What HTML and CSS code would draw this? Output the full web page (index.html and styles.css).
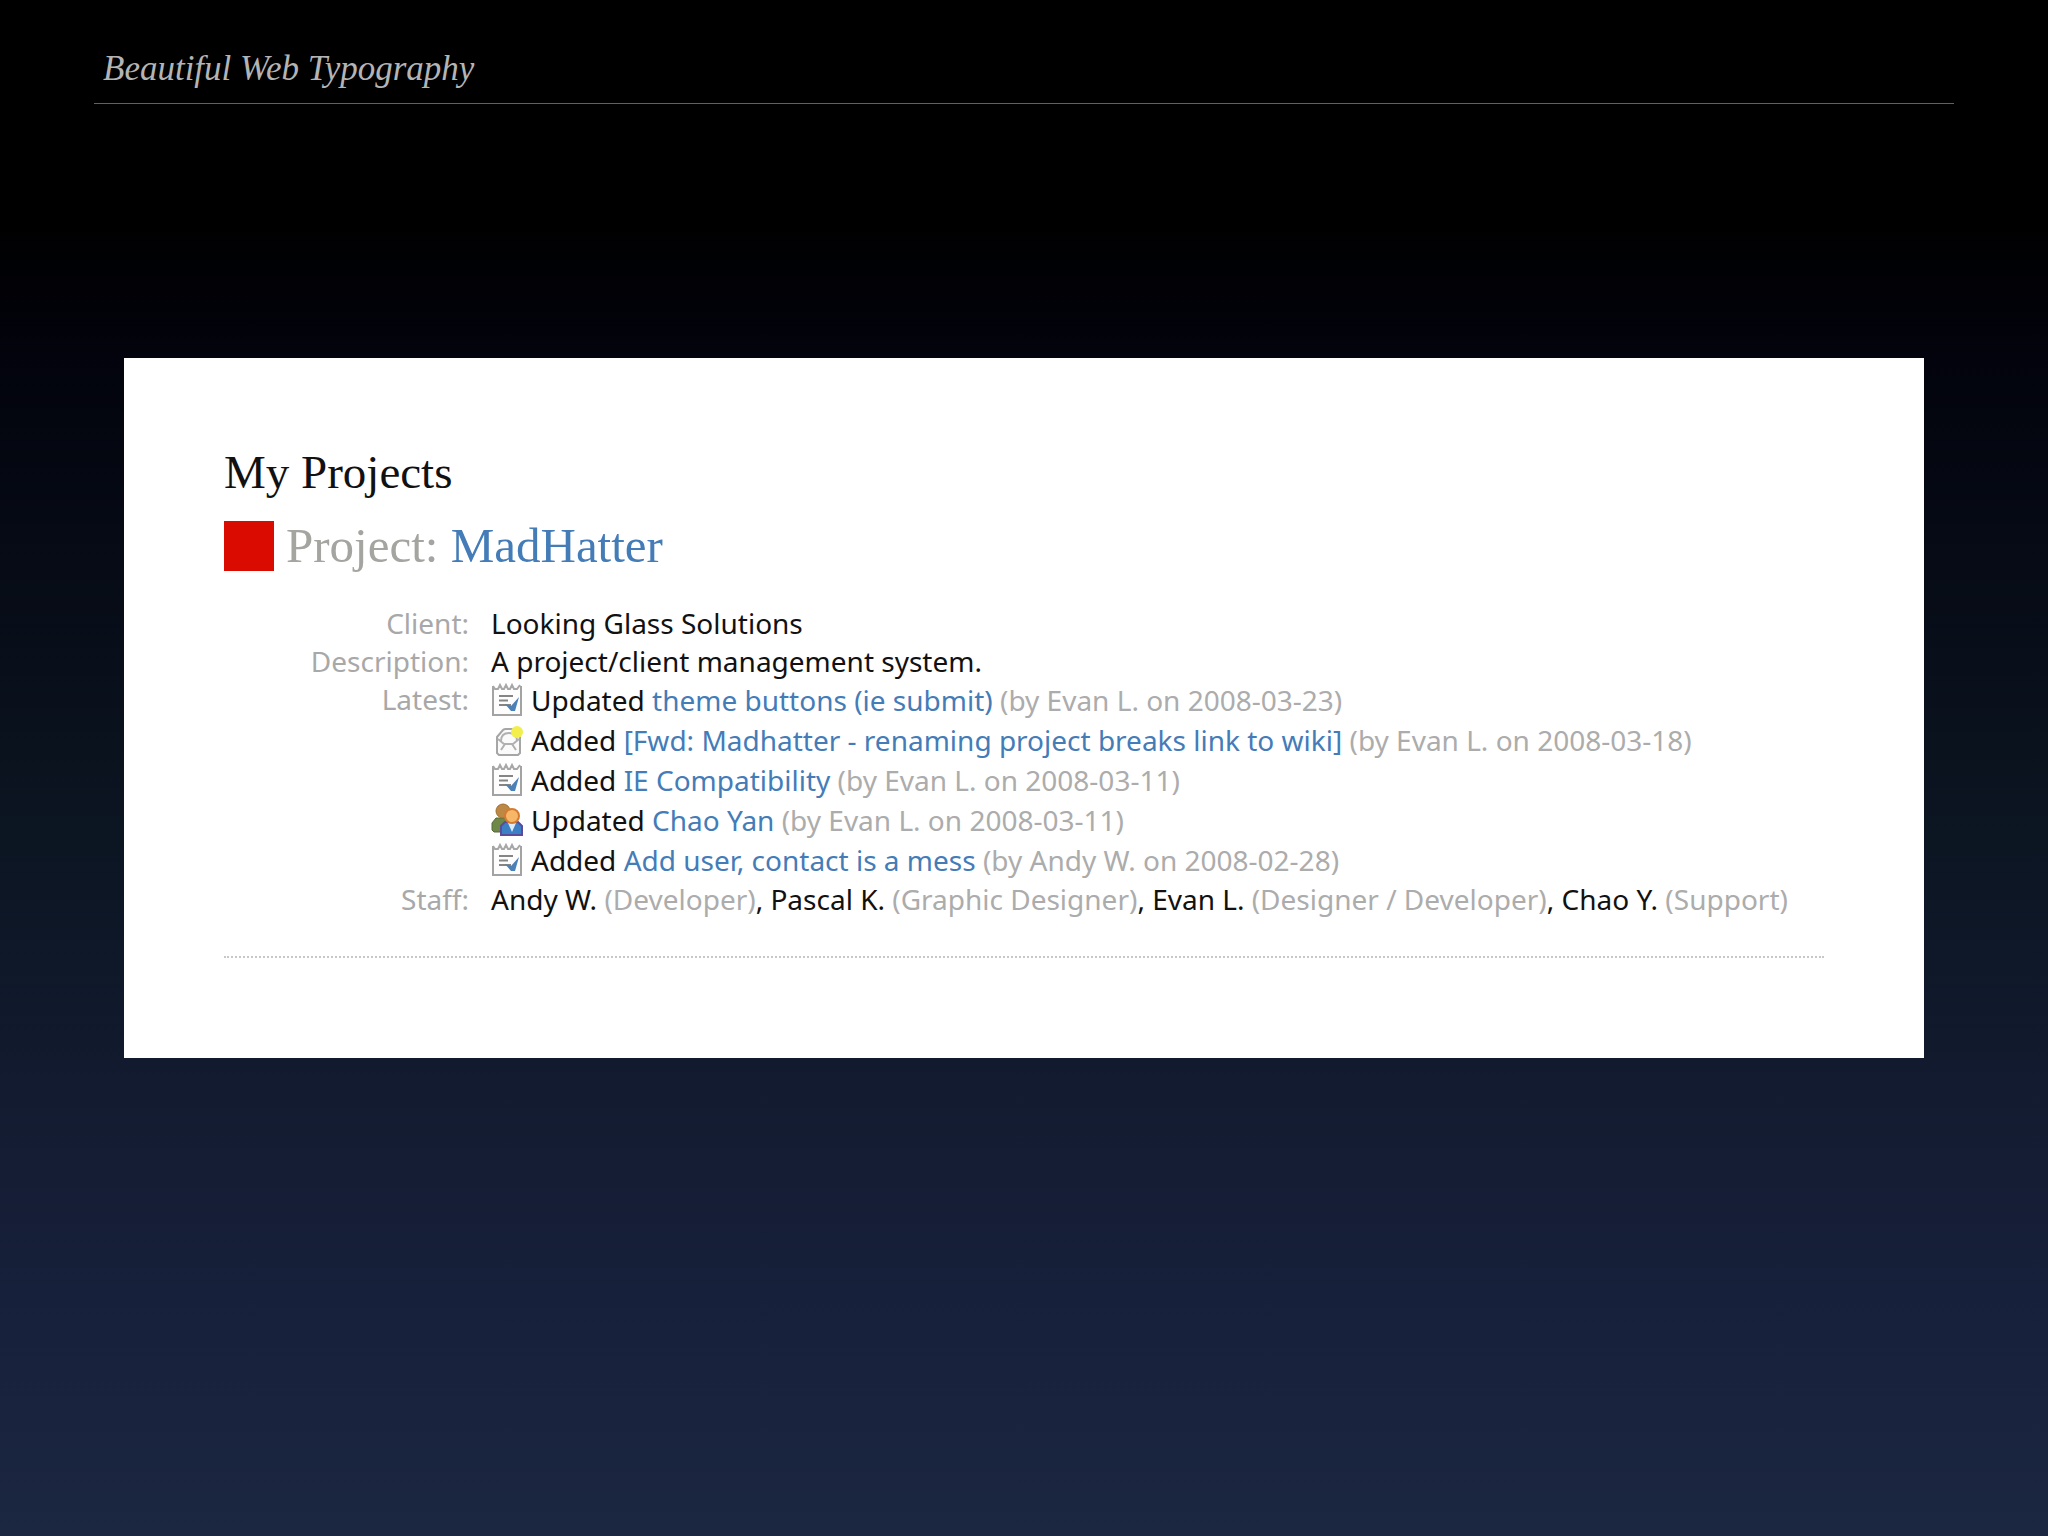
FILE: index.html
```html
<!DOCTYPE html>
<html lang="en">

<head>
    <meta charset="UTF-8">
    <meta name="viewport" content="width=device-width, initial-scale=1.0">
    <title>Beautiful Web Typography</title>
    <link rel="stylesheet" href="styles.css">
</head>

<body>
    <!-- Shared icons -->
    <svg class="sprite" aria-hidden="true">
        <symbol id="icon-task" viewBox="0 0 32 34">
            <path d="M2 3v29h28V3" fill="#fdfdfd" stroke="#a3a3a3" stroke-width="2" />
            <path d="M2 3l2 3h3l2-4 2 4h2l2-4 2 4h2l2-4 2 4h3l3-4" fill="none" stroke="#a8a8a8" stroke-width="2" />
            <path d="M8 13h14M8 17.500h9M8 22h12" stroke="#858585" stroke-width="2" />
            <path d="M14 21l6 2 8-9-4 14h-4z" fill="#4c80b8" />
        </symbol>
        <symbol id="icon-mail" viewBox="0 0 32 34">
            <path d="M6 14l6-7q1-1 3-1h8l6 6v18l-2 2H8l-2-2z" fill="#fafafa" stroke="#a6a6a6" stroke-width="2" />
            <path d="M10 18c0-6 3-8 8-8s8 2 8 8" fill="none" stroke="#b0b0b0" stroke-width="2" />
            <path d="M7 16l6 5h9l6-5M14 21l-4 6M21 21l4 6" fill="none" stroke="#b0b0b0" stroke-width="2" />
            <circle cx="26" cy="9" r="6" fill="#f2ee4c" />
        </symbol>
        <symbol id="icon-people" viewBox="0 0 32 34">
            <path d="M1 27v-7l4-5h10v14H3z" fill="#6d8848" stroke="#536b38" />
            <circle cx="12" cy="8" r="7" fill="#bd8845" stroke="#a3702f" />
            <path d="M10 32V23l4-4h13l4 4v9z" fill="#3d7fc4" stroke="#5b4c9b" stroke-width="2" />
            <path d="M17 20l4 9 4-9z" fill="#dcecf8" />
            <circle cx="21" cy="13" r="7" fill="#f7b768" stroke="#d57b30" stroke-width="2" />
        </symbol>
    </svg>

    <header class="page-header">
        <p class="page-title">Beautiful Web Typography</p>
    </header>

    <main class="panel">
        <h1 class="heading">My Projects</h1>
        <h2 class="heading project">
            <span class="swatch"></span>
            <span>Project: <a href="#">MadHatter</a></span>
        </h2>

        <dl class="details">
            <dt>Client:</dt>
            <dd>Looking Glass Solutions</dd>
            <dt>Description:</dt>
            <dd>A project/client management system.</dd>
            <dt>Latest:</dt>
            <dd>
                <ul class="latest">
                    <li><svg class="icon"><use href="#icon-task" /></svg><span>Updated <a href="#">theme buttons (ie submit)</a> <small>(by Evan L. on 2008-03-23)</small></span></li>
                    <li><svg class="icon"><use href="#icon-mail" /></svg><span>Added <a href="#">[Fwd: Madhatter - renaming project breaks link to wiki]</a> <small>(by Evan L. on 2008-03-18)</small></span></li>
                    <li><svg class="icon"><use href="#icon-task" /></svg><span>Added <a href="#">IE Compatibility</a> <small>(by Evan L. on 2008-03-11)</small></span></li>
                    <li><svg class="icon"><use href="#icon-people" /></svg><span>Updated <a href="#">Chao Yan</a> <small>(by Evan L. on 2008-03-11)</small></span></li>
                    <li><svg class="icon"><use href="#icon-task" /></svg><span>Added <a href="#">Add user, contact is a mess</a> <small>(by Andy W. on 2008-02-28)</small></span></li>
                </ul>
            </dd>
            <dt>Staff:</dt>
            <dd>Andy W. <small>(Developer)</small>, Pascal K. <small>(Graphic Designer)</small>, Evan L. <small>(Designer / Developer)</small>, Chao Y. <small>(Support)</small></dd>
        </dl>
    </main>
</body>

</html>
```
FILE: styles.css
```css
* {
    box-sizing: border-box;
    margin: 0;
    padding: 0;
}

body {
    min-height: 100vh;
    background: linear-gradient(#000000 14%, #02030c 23%, #0b1420 52%, #17203a 84%, #1b2641);
    font-family: "Noto Sans", "Open Sans", sans-serif;
    font-size: 28px;
    line-height: 38px;
    color: #111111;
}

a {
    color: #447cb8;
    text-decoration: none;
}

a:hover {
    text-decoration: underline;
}

small {
    font-size: inherit;
    color: #acacac;
}

.sprite {
    display: none;
}

/* Header */

.page-header {
    margin: 0 94px;
    padding: 46px 9px 12px;
    border-bottom: 1px solid #5f635e;
}

.page-title {
    font-family: "Liberation Serif", serif;
    font-size: 35px;
    font-style: italic;
    line-height: 45px;
    color: #b4b4b4;
}

/* Project panel */

.panel {
    margin: 254px 124px 0;
    padding: 84px 100px 100px;
    background-color: #ffffff;
}

.heading {
    font-family: "Liberation Serif", serif;
    font-size: 47px;
    font-weight: normal;
    line-height: 60px;
}

.project {
    display: flex;
    align-items: center;
    gap: 12px;
    margin-top: 14px;
    font-size: 49px;
    color: #a4a4a0;
}

.swatch {
    width: 50px;
    height: 50px;
    background-color: #da0b00;
}

.details {
    display: grid;
    grid-template-columns: 245px 1fr;
    column-gap: 22px;
    margin-top: 28px;
    padding-bottom: 38px;
    border-bottom: 2px dotted #c8c8c8;
}

.details dt {
    text-align: right;
    color: #a8a8a8;
}

.latest {
    list-style: none;
}

.latest li {
    display: flex;
    align-items: center;
    gap: 8px;
    height: 40px;
}

.icon {
    flex: none;
    width: 32px;
    height: 34px;
}
```
